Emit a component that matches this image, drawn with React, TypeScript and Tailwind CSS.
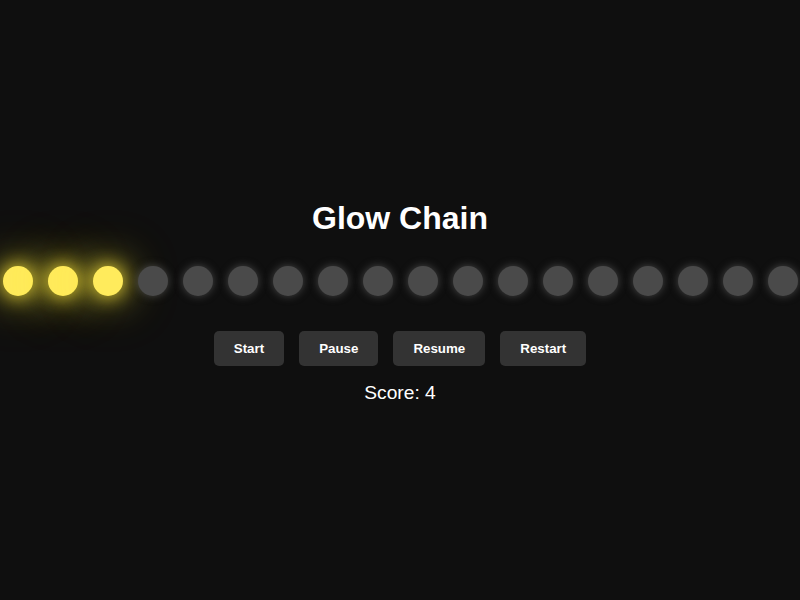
const lit = 3;
const total = 18;

export default function App() {
  return (
    <div className="flex h-screen w-full flex-col items-center justify-center overflow-hidden bg-[#0f0f0f] pt-[3px] font-['Liberation_Sans',Arial,sans-serif] text-white">
      <h1 className="mb-[28px] text-[32px] font-bold leading-[39px]">Glow Chain</h1>

      {/* chain of dots */}
      <div className="mb-[35px] flex gap-[15px]">
        {Array.from({ length: total }, (_, i) =>
          i < lit ? (
            <div
              key={i}
              className="h-[30px] w-[30px] shrink-0 rounded-full bg-[#ffeb5c] shadow-[0_0_20px_#ffeb3b,0_0_40px_rgba(255,235,59,0.7),0_0_60px_rgba(255,235,59,0.35)]"
            />
          ) : (
            <div
              key={i}
              className="h-[30px] w-[30px] shrink-0 rounded-full bg-[#4a4a4a] shadow-[0_0_8px_rgba(110,110,110,0.6)]"
            />
          )
        )}
      </div>

      <div className="flex gap-[15px]">
        {["Start", "Pause", "Resume", "Restart"].map((label) => (
          <button
            key={label}
            type="button"
            className="rounded-[5px] bg-[#333333] px-5 py-[10px] text-[13.33px] font-bold leading-[15px] text-white"
          >
            {label}
          </button>
        ))}
      </div>

      <div className="mt-[16px] text-[19.2px] leading-[22px]">Score: 4</div>
    </div>
  );
}
